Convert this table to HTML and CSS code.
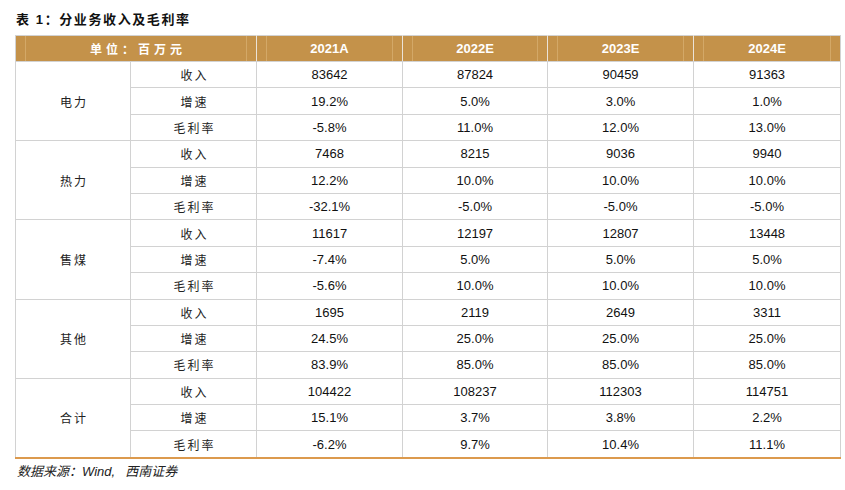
FILE: index.html
```html
<!DOCTYPE html>
<html lang="zh">
<head>
<meta charset="utf-8">
<title>分业务收入及毛利率</title>
<link rel="stylesheet" href="styles.css">
</head>
<body>
<div class="page">
  <div class="title">表 1：分业务收入及毛利率</div>
  <table class="tbl">
    <colgroup>
      <col class="c1"><col class="c2"><col class="c3"><col class="c4"><col class="c5"><col class="c6">
    </colgroup>
    <thead>
      <tr>
        <th colspan="2" class="unit">单位：百万元</th>
        <th>2021A</th><th>2022E</th><th>2023E</th><th>2024E</th>
      </tr>
    </thead>
    <tbody>
      <tr><td rowspan="3" class="seg">电力</td><td class="lbl">收入</td><td>83642</td><td>87824</td><td>90459</td><td>91363</td></tr>
      <tr><td class="lbl">增速</td><td>19.2%</td><td>5.0%</td><td>3.0%</td><td>1.0%</td></tr>
      <tr><td class="lbl">毛利率</td><td>-5.8%</td><td>11.0%</td><td>12.0%</td><td>13.0%</td></tr>

      <tr><td rowspan="3" class="seg">热力</td><td class="lbl">收入</td><td>7468</td><td>8215</td><td>9036</td><td>9940</td></tr>
      <tr><td class="lbl">增速</td><td>12.2%</td><td>10.0%</td><td>10.0%</td><td>10.0%</td></tr>
      <tr><td class="lbl">毛利率</td><td>-32.1%</td><td>-5.0%</td><td>-5.0%</td><td>-5.0%</td></tr>

      <tr><td rowspan="3" class="seg">售煤</td><td class="lbl">收入</td><td>11617</td><td>12197</td><td>12807</td><td>13448</td></tr>
      <tr><td class="lbl">增速</td><td>-7.4%</td><td>5.0%</td><td>5.0%</td><td>5.0%</td></tr>
      <tr><td class="lbl">毛利率</td><td>-5.6%</td><td>10.0%</td><td>10.0%</td><td>10.0%</td></tr>

      <tr><td rowspan="3" class="seg">其他</td><td class="lbl">收入</td><td>1695</td><td>2119</td><td>2649</td><td>3311</td></tr>
      <tr><td class="lbl">增速</td><td>24.5%</td><td>25.0%</td><td>25.0%</td><td>25.0%</td></tr>
      <tr><td class="lbl">毛利率</td><td>83.9%</td><td>85.0%</td><td>85.0%</td><td>85.0%</td></tr>

      <tr><td rowspan="3" class="seg">合计</td><td class="lbl">收入</td><td>104422</td><td>108237</td><td>112303</td><td>114751</td></tr>
      <tr><td class="lbl">增速</td><td>15.1%</td><td>3.7%</td><td>3.8%</td><td>2.2%</td></tr>
      <tr class="last"><td class="lbl">毛利率</td><td>-6.2%</td><td>9.7%</td><td>10.4%</td><td>11.1%</td></tr>
    </tbody>
  </table>
  <div class="source">数据来源：<span class="lat">Wind,</span><span class="gap"></span>西南证券</div>
</div>
</body>
</html>
```

FILE: styles.css
```css
html, body {
  margin: 0;
  padding: 0;
  background: #ffffff;
}

.page {
  padding: 10px 5px 0 15px;
  font-family: "Liberation Sans", "Noto Sans CJK SC", sans-serif;
  color: #111111;
}

.title {
  height: 20px;
  line-height: 20px;
  font-size: 13px;
  font-weight: bold;
  letter-spacing: 1.6px;
  padding-left: 1px;
  font-family: "Liberation Sans", "Noto Sans CJK SC", sans-serif;
}

.tbl {
  margin-top: 5px;
  width: 825px;
  border-collapse: collapse;
  table-layout: fixed;
  border-top: 1px solid #d2d2d2;
}

.c1 { width: 115px; }
.c2 { width: 126px; }
.c3 { width: 146px; }
.c4 { width: 145px; }
.c5 { width: 146px; }
.c6 { width: 147px; }

.tbl th {
  height: 25px;
  padding: 0;
  background-color: #c4924a;
  background-image:
    linear-gradient(#d3a867, #d3a867),
    linear-gradient(#d3a867, #d3a867);
  background-size: 1px 100%, 1px 100%;
  background-position: 9px 0, calc(100% - 9px) 0;
  background-repeat: no-repeat;
  color: #ffffff;
  font-size: 13px;
  font-weight: bold;
  text-align: center;
  border-left: 1px solid #ebe3d8;
  border-right: 1px solid #ebe3d8;
  border-bottom: 1px solid #d2d2d2;
}

.tbl th:first-child {
  border-left: 1px solid #d2d2d2;
}
.tbl th:last-child {
  border-right: 1px solid #d2d2d2;
}

.tbl th.unit {
  font-family: "Noto Sans CJK SC", sans-serif;
  font-size: 12px;
  font-weight: bold;
  letter-spacing: 4px;
  text-indent: 4px;
}

.tbl td {
  height: 25.4px;
  padding: 0;
  border: 1px solid #d2d2d2;
  text-align: center;
  font-size: 13px;
  color: #111111;
}

.tbl td.seg,
.tbl td.lbl {
  font-family: "Noto Sans CJK SC", sans-serif;
  font-size: 12px;
  letter-spacing: 2px;
  text-indent: 2px;
  color: #222222;
}

.tbl tr.last td {
  border-bottom: 2px solid #dc9a4e;
}
.tbl td.seg {
  border-bottom: 1px solid #d2d2d2;
}
.tbl tbody tr:nth-last-child(3) td.seg {
  border-bottom: 2px solid #dc9a4e;
}

.source {
  height: 20px;
  line-height: 20px;
  margin-top: 2px;
  padding-left: 2px;
  font-size: 13px;
  font-style: italic;
  color: #222222;
  font-family: "Noto Sans CJK SC", sans-serif;
}

.source .lat {
  font-family: "Liberation Sans", sans-serif;
}

.source .gap {
  display: inline-block;
  width: 10px;
}
```
